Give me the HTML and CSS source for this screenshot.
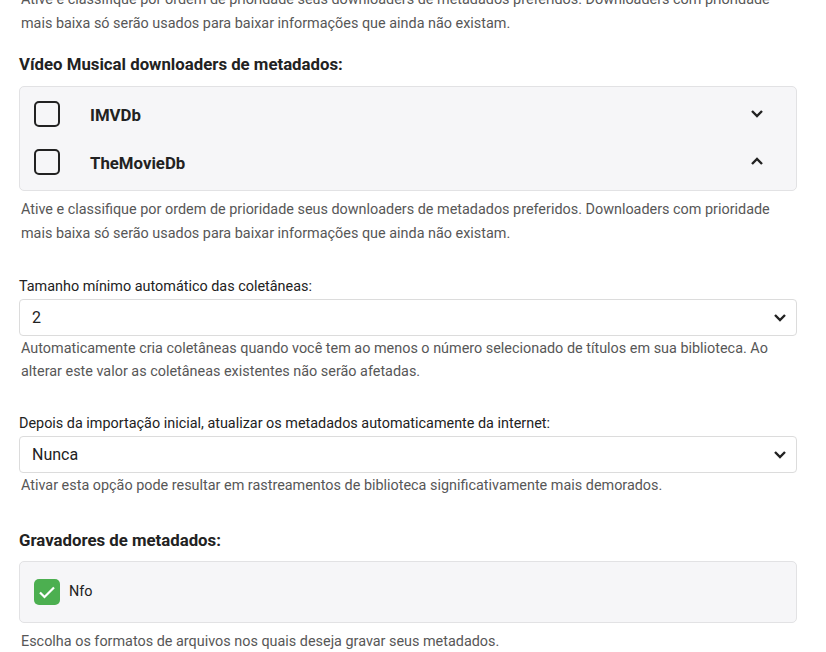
FILE: index.html
```html
<!DOCTYPE html>
<html lang="pt">
<head>
<meta charset="utf-8">
<link rel="stylesheet" href="styles.css">
</head>
<body>
<div class="page">
  <p class="desc desc-top">Ative e classifique por ordem de prioridade seus downloaders de metadados preferidos. Downloaders com prioridade mais baixa só serão usados para baixar informações que ainda não existam.</p>

  <h3 class="heading heading-first">Vídeo Musical downloaders de metadados:</h3>
  <div class="box list">
    <div class="row">
      <span class="check"></span>
      <span class="row-label">IMVDb</span>
      <svg class="chev" width="14" height="9" viewBox="0 0 14 9"><path d="M2 2l5 5 5-5" fill="none" stroke="#222" stroke-width="2.4"/></svg>
    </div>
    <div class="row">
      <span class="check"></span>
      <span class="row-label">TheMovieDb</span>
      <svg class="chev" width="14" height="9" viewBox="0 0 14 9"><path d="M2 7l5-5 5 5" fill="none" stroke="#222" stroke-width="2.4"/></svg>
    </div>
  </div>
  <p class="desc desc-after">Ative e classifique por ordem de prioridade seus downloaders de metadados preferidos. Downloaders com prioridade mais baixa só serão usados para baixar informações que ainda não existam.</p>

  <label class="field-label">Tamanho mínimo automático das coletâneas:</label>
  <div class="select">
    <span>2</span>
    <svg class="chev" width="14" height="9" viewBox="0 0 14 9"><path d="M2 2l5 5 5-5" fill="none" stroke="#222" stroke-width="2.4"/></svg>
  </div>
  <p class="desc desc-field">Automaticamente cria coletâneas quando você tem ao menos o número selecionado de títulos em sua biblioteca. Ao alterar este valor as coletâneas existentes não serão afetadas.</p>

  <label class="field-label">Depois da importação inicial, atualizar os metadados automaticamente da internet:</label>
  <div class="select">
    <span>Nunca</span>
    <svg class="chev" width="14" height="9" viewBox="0 0 14 9"><path d="M2 2l5 5 5-5" fill="none" stroke="#222" stroke-width="2.4"/></svg>
  </div>
  <p class="desc desc-field">Ativar esta opção pode resultar em rastreamentos de biblioteca significativamente mais demorados.</p>

  <h3 class="heading heading-second">Gravadores de metadados:</h3>
  <div class="box writers">
    <span class="check checked"><svg width="26" height="26" viewBox="0 0 26 26"><path d="M6 13.5l4.5 4.5 9.5-9.5" fill="none" stroke="#fff" stroke-width="2.2"/></svg></span>
    <span class="nfo">Nfo</span>
  </div>
  <p class="desc desc-after2">Escolha os formatos de arquivos nos quais deseja gravar seus metadados.</p>
</div>
</body>
</html>
```

FILE: styles.css
```css
* { box-sizing: border-box; }
html, body { margin: 0; padding: 0; background: #fff; }
body {
  font-family: Roboto, "Noto Sans", sans-serif;
  color: #222;
  overflow: hidden;
  height: 652px;
}
.page {
  width: 778px;
  margin-left: 19px;
}
.desc {
  margin: 0;
  padding-left: 2px;
  font-size: 14.4px;
  line-height: 23.5px;
  color: #575757;
}
.desc-top { margin-top: -12px; }
.heading {
  margin: 0;
  font-size: 16.8px;
  font-weight: 700;
  line-height: 24px;
  color: #222;
  margin-bottom: 10px;
}
.heading-first { margin-top: 16.5px; }
.heading-second { margin-top: 30.5px; margin-bottom: 9px; }
.box {
  background: #f6f6f8;
  border: 1px solid #e2e2e4;
  border-radius: 5px;
}
.list { padding: 3px 0 4px; }
.row {
  height: 48px;
  display: flex;
  align-items: center;
  padding-left: 14px;
  padding-right: 32px;
}
.check {
  width: 26px;
  height: 26px;
  border: 2px solid #222;
  border-radius: 5px;
  flex: none;
  display: inline-flex;
  align-items: center;
  justify-content: center;
}
.check.checked {
  background: #4caf50;
  border: none;
}
.row-label {
  margin-left: 30px;
  padding-top: 3px;
  font-size: 16.8px;
  font-weight: 700;
  flex: 1;
}
.row .chev { flex: none; }
.desc-after { margin-top: 7px; line-height: 24px; }
.field-label {
  display: block;
  margin-top: 31px;
  font-size: 14.4px;
  line-height: 20px;
  color: #222;
}
.desc-field + .field-label { margin-top: 30px; }
.select {
  margin-top: 2px;
  height: 37px;
  border: 1px solid #dcdcdc;
  border-radius: 4px;
  background: #fff;
  display: flex;
  align-items: center;
  justify-content: space-between;
  padding: 0 9px 0 12px;
  font-size: 16px;
}
.desc-field { margin-top: 1px; }
.writers {
  height: 62px;
  display: flex;
  align-items: center;
  padding-left: 14px;
}
.nfo {
  margin-left: 9px;
  font-size: 14.4px;
  color: #222;
}
.desc-after2 { margin-top: 7px; }
```
